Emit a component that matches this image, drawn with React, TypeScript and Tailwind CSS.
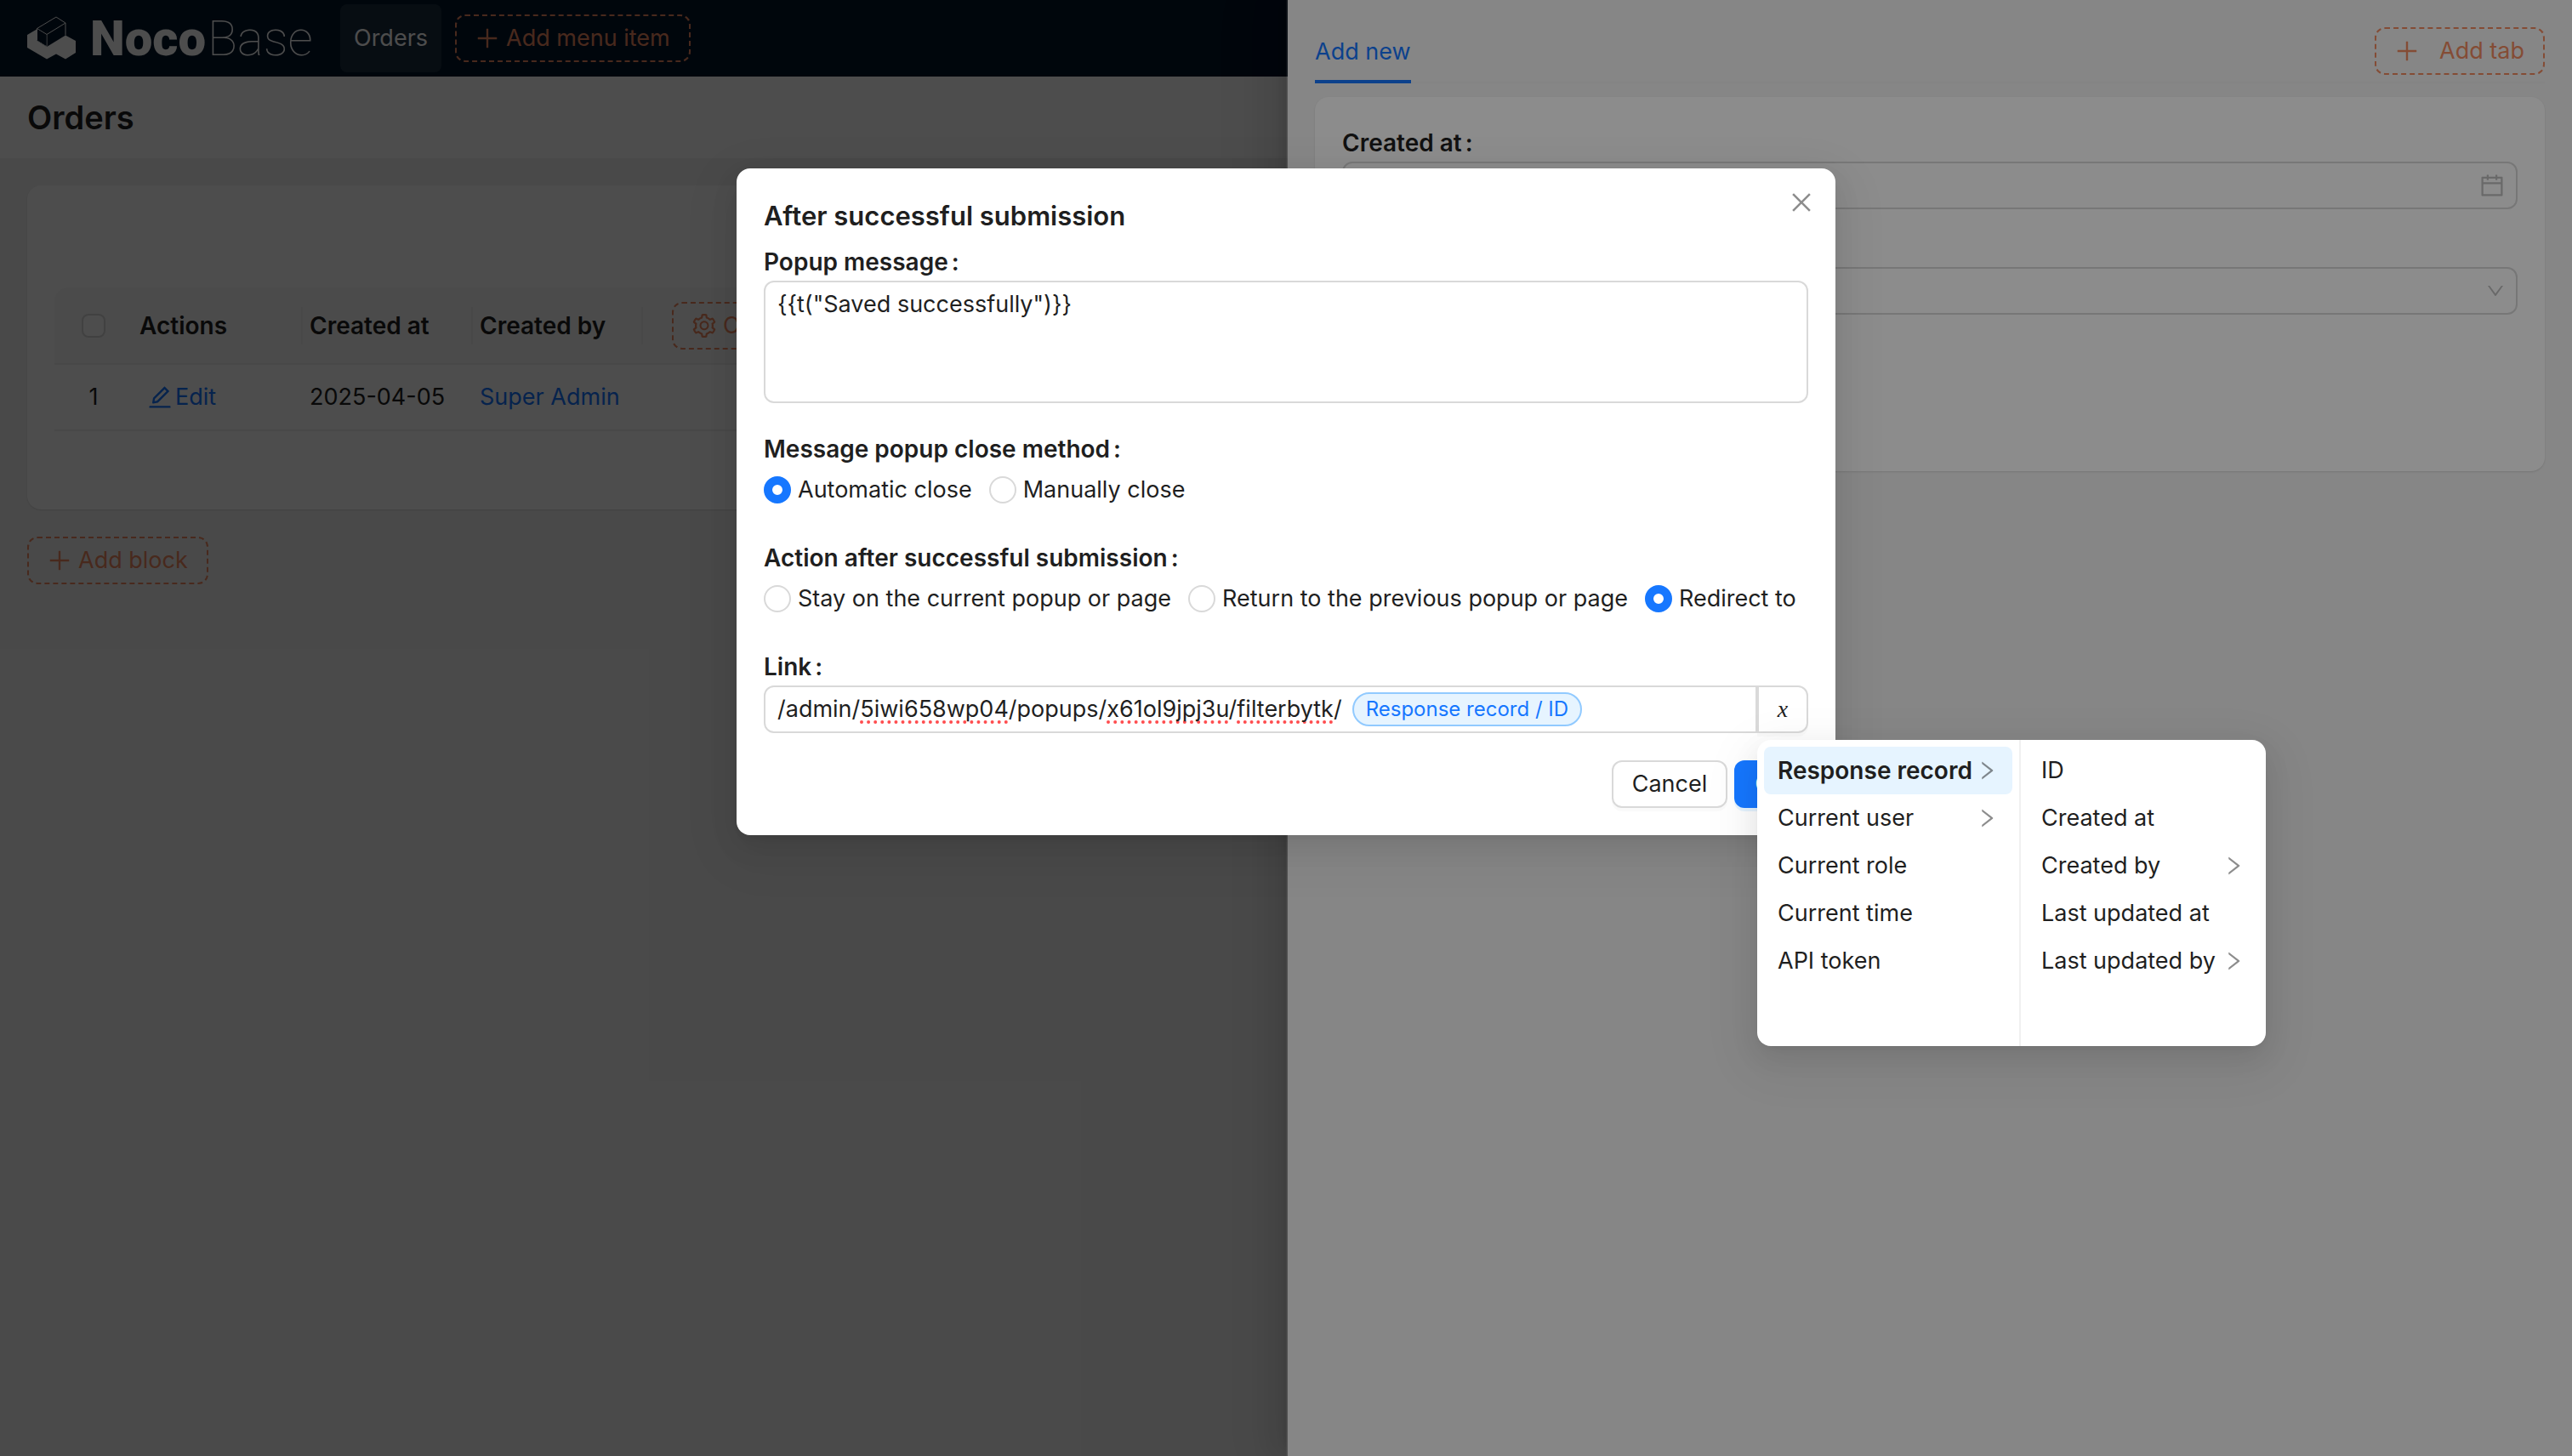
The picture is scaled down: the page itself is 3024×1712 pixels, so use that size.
import type { ReactNode } from "react";
import clsx from "clsx";
import {
  AiOutlineCalendar,
  AiOutlineClose,
  AiOutlineDown,
  AiOutlineEdit,
  AiOutlinePlus,
  AiOutlineRight,
  AiOutlineSetting,
} from "react-icons/ai";

type MenuOption = { label: string; children?: boolean; active?: boolean };

const VARIABLE_OPTIONS: MenuOption[] = [
  { label: "Response record", children: true, active: true },
  { label: "Current user", children: true },
  { label: "Current role" },
  { label: "Current time" },
  { label: "API token" },
];

const RECORD_FIELDS: MenuOption[] = [
  { label: "ID" },
  { label: "Created at" },
  { label: "Created by", children: true },
  { label: "Last updated at" },
  { label: "Last updated by", children: true },
];

function Logo() {
  return (
    <a href="#home" className="flex w-[368px] items-center gap-4 pl-8 text-white" aria-label="NocoBase">
      <svg viewBox="0 0 58 52" className="h-[52px] w-[58px] shrink-0" aria-hidden="true">
        <path
          d="M0 22L11 15.5V28.5L23 36L45 22.5L57 29V43L45 50.5L34 44.5L23 50.5L0 37Z"
          fill="currentColor"
        />
        <path
          d="M11.5 14.5L34 1L45 8V22.5M11.5 14.5V28.5L23 35.5V21.5M11.5 14.5L23 21.5L45 8"
          fill="none"
          stroke="currentColor"
          strokeWidth="1"
        />
        <path d="M12 15.5L22.5 22V35L12 28.5Z" fill="#001529" />
      </svg>
      <span className="flex gap-0.5 font-['Roboto',sans-serif] text-[58px] leading-none">
        <span className="font-black">Noco</span>
        <span className="font-thin">Base</span>
      </span>
    </a>
  );
}

/** Dashed orange button used by the page designer. */
function DesignerButton({ icon, wide, children }: { icon: ReactNode; wide?: boolean; children: ReactNode }) {
  return (
    <button
      type="button"
      className={clsx(
        "flex h-14 shrink-0 items-center whitespace-nowrap rounded-xl border-2 border-dashed border-[#f18b62] pl-5 pr-[22px] text-[#f18b62]",
        wide ? "gap-[22px]" : "gap-1.5"
      )}
    >
      {icon}
      {children}
    </button>
  );
}

function FieldLabel({ htmlFor, children }: { htmlFor: string; children: ReactNode }) {
  return (
    <label htmlFor={htmlFor} className="block text-[28px] font-semibold leading-[44px]">
      {children}
      <span className="ml-1">:</span>
    </label>
  );
}

function HeadCell({ children }: { children: ReactNode }) {
  return (
    <th scope="col" className="p-0 text-left text-[28px] font-semibold leading-[44px]">
      <div className="border-r-2 border-[#f0f0f0] pl-2">{children}</div>
    </th>
  );
}

function OrdersTable() {
  return (
    <table className="w-full table-fixed border-collapse">
      <colgroup>
        <col className="w-[92px]" />
        <col className="w-[200px]" />
        <col className="w-[200px]" />
        <col className="w-[200px]" />
        <col />
      </colgroup>
      <thead>
        <tr className="h-[90px] border-b-2 border-[#f0f0f0] bg-[#fafafa]">
          <th className="p-0">
            <input
              type="checkbox"
              aria-label="Select all"
              className="mx-auto block size-7 appearance-none rounded-lg border-2 border-[#d9d9d9] bg-white"
            />
          </th>
          <HeadCell>Actions</HeadCell>
          <HeadCell>Created at</HeadCell>
          <HeadCell>Created by</HeadCell>
          <th className="p-0 pl-[34px] text-left font-normal">
            <DesignerButton icon={<AiOutlineSetting className="size-8" />}>Configure columns</DesignerButton>
          </th>
        </tr>
      </thead>
      <tbody>
        <tr className="h-[78px] border-b-2 border-[#f0f0f0]">
          <td className="p-0 text-center">1</td>
          <td className="p-0 pl-4">
            <a href="#edit" className="flex items-center gap-0.5 text-[#1677ff]">
              <AiOutlineEdit className="size-8" />
              Edit
            </a>
          </td>
          <td className="whitespace-nowrap p-0 pl-2">2025-04-05</td>
          <td className="p-0 pl-2">
            <a href="#user" className="whitespace-nowrap text-[#1677ff]">
              Super Admin
            </a>
          </td>
          <td />
        </tr>
      </tbody>
    </table>
  );
}

function OrdersPage() {
  return (
    <div className="min-h-screen bg-[#f5f5f5]">
      <header className="flex h-[90px] items-center bg-[#001529] pr-8">
        <Logo />
        <nav className="ml-8 flex items-center gap-4">
          <a href="#orders" className="flex h-20 items-center rounded-lg bg-white/10 px-4 text-white">
            Orders
          </a>
          <DesignerButton icon={<AiOutlinePlus className="size-8" />}>Add menu item</DesignerButton>
        </nav>
      </header>
      <div className="flex h-24 items-center bg-white px-8">
        <h1 className="text-[38px] font-semibold leading-[56px]">Orders</h1>
      </div>
      <main className="flex flex-col items-start gap-8 p-8">
        <section className="w-full rounded-2xl bg-white px-8 pb-[92px] pt-[120px] shadow-sm">
          <div className="overflow-hidden rounded-t-2xl">
            <OrdersTable />
          </div>
        </section>
        <DesignerButton icon={<AiOutlinePlus className="size-8" />}>Add block</DesignerButton>
      </main>
    </div>
  );
}

function RecordDrawer() {
  return (
    <aside className="absolute inset-y-0 right-0 w-1/2 border-l-2 border-white/10 bg-[#f5f5f5] bg-clip-padding px-8 shadow-[-12px_0_32px_rgba(0,0,0,0.08),-6px_0_12px_-8px_rgba(0,0,0,0.12),-18px_0_56px_16px_rgba(0,0,0,0.05)]">
      <div className="flex items-start justify-between border-b-2 border-[#f0f0f0] pt-8" role="tablist">
        <button
          type="button"
          role="tab"
          aria-selected="true"
          className="-mb-0.5 h-[66px] border-b-4 border-[#1677ff] pb-1 text-[#1677ff]"
        >
          Add new
        </button>
        <DesignerButton wide icon={<AiOutlinePlus className="size-8" />}>
          Add tab
        </DesignerButton>
      </div>
      <form className="mt-4 flex flex-col gap-6 rounded-2xl bg-white px-8 pb-[184px] pt-8 shadow-sm">
        <div>
          <FieldLabel htmlFor="created-at">Created at</FieldLabel>
          <div className="flex h-14 items-center rounded-xl border-2 border-[#d9d9d9] px-3">
            <input id="created-at" type="text" className="min-w-0 flex-1 outline-none" />
            <AiOutlineCalendar className="size-8 text-black/25" />
          </div>
        </div>
        <div>
          <FieldLabel htmlFor="created-by">Created by</FieldLabel>
          <div className="flex h-14 items-center rounded-xl border-2 border-[#d9d9d9] px-3">
            <select id="created-by" className="h-full min-w-0 flex-1 appearance-none outline-none" />
            <AiOutlineDown className="size-6 text-black/25" />
          </div>
        </div>
      </form>
    </aside>
  );
}

function RadioOption({ name, label, checked }: { name: string; label: string; checked?: boolean }) {
  return (
    <label className="flex items-center gap-2 whitespace-nowrap">
      <input
        type="radio"
        name={name}
        defaultChecked={checked}
        className="size-8 shrink-0 appearance-none rounded-full border-2 border-[#d9d9d9] bg-white checked:border-[10px] checked:border-[#1677ff]"
      />
      {label}
    </label>
  );
}

function RadioField({ legend, children }: { legend: string; children: ReactNode }) {
  return (
    <fieldset className="mt-8">
      <legend className="text-[28px] font-semibold leading-[44px]">
        {legend}
        <span className="ml-1">:</span>
      </legend>
      <div className="flex h-[52px] items-center gap-5">{children}</div>
    </fieldset>
  );
}

function MenuColumn({ options }: { options: MenuOption[] }) {
  return (
    <ul role="menu" className="p-2">
      {options.map((option) => (
        <li key={option.label} role="none">
          <button
            type="button"
            role="menuitem"
            className={clsx(
              "flex h-14 w-full items-center justify-between whitespace-nowrap rounded-lg px-4",
              option.active && "bg-[#e6f4ff] text-[28px] font-semibold"
            )}
          >
            {option.label}
            {option.children && <AiOutlineRight className="size-7 text-black/45" />}
          </button>
        </li>
      ))}
    </ul>
  );
}

function VariableMenu() {
  return (
    <div className="absolute left-0 top-full z-10 mt-2 grid h-[360px] w-[598px] grid-cols-[310px_1fr] divide-x-2 divide-[#f0f0f0] rounded-2xl bg-white shadow-[0_12px_32px_rgba(0,0,0,0.08),0_6px_12px_-8px_rgba(0,0,0,0.12),0_18px_56px_16px_rgba(0,0,0,0.05)]">
      <MenuColumn options={VARIABLE_OPTIONS} />
      <MenuColumn options={RECORD_FIELDS} />
    </div>
  );
}

function Misspelled({ children }: { children: ReactNode }) {
  return (
    <span className="underline decoration-[#ff4d4f] decoration-dotted decoration-[4px] underline-offset-4 [text-decoration-skip-ink:none]">
      {children}
    </span>
  );
}

function LinkField() {
  return (
    <div className="mt-8">
      <div id="link-label" className="text-[28px] font-semibold leading-[44px]">
        Link<span className="ml-1">:</span>
      </div>
      <div className="flex">
        <div
          role="textbox"
          aria-labelledby="link-label"
          contentEditable
          suppressContentEditableWarning
          spellCheck={false}
          className="flex h-14 min-w-0 flex-1 items-center gap-3 whitespace-nowrap rounded-l-xl border-2 border-[#d9d9d9] px-3.5 outline-none"
        >
          <span>
            /admin/<Misspelled>5iwi658wp04</Misspelled>/popups/<Misspelled>x61ol9jpj3u</Misspelled>/
            <Misspelled>filterbytk</Misspelled>/
          </span>
          <span className="flex h-10 items-center rounded-full border-2 border-[#91caff] bg-[#e6f4ff] px-3.5 text-2xl text-[#1677ff]">
            Response record / ID
          </span>
        </div>
        <div className="relative">
          <button
            type="button"
            aria-label="Variables"
            className="h-14 w-[60px] rounded-r-xl border-2 border-[#d9d9d9] bg-white font-['Liberation_Serif',serif] text-[28px] italic shadow-[0_4px_0_rgba(0,0,0,0.02)]"
          >
            x
          </button>
          <VariableMenu />
        </div>
      </div>
    </div>
  );
}

function SubmissionDialog() {
  return (
    <div
      role="dialog"
      aria-labelledby="dialog-title"
      className="relative w-[1292px] rounded-2xl bg-white p-8 shadow-[0_12px_32px_rgba(0,0,0,0.08),0_6px_12px_-8px_rgba(0,0,0,0.12),0_18px_56px_16px_rgba(0,0,0,0.05)]"
    >
      <button type="button" aria-label="Close" className="absolute right-6 top-6 text-black/45">
        <AiOutlineClose className="size-8" />
      </button>
      <h2 id="dialog-title" className="mb-2 text-[31px] font-semibold leading-[48px]">
        After successful submission
      </h2>
      <FieldLabel htmlFor="popup-message">Popup message</FieldLabel>
      <textarea
        id="popup-message"
        defaultValue={'{{t("Saved successfully")}}'}
        spellCheck={false}
        className="block h-36 w-full resize-none rounded-xl border-2 border-[#d9d9d9] px-3.5 py-1 outline-none"
      />
      <RadioField legend="Message popup close method">
        <RadioOption name="close" label="Automatic close" checked />
        <RadioOption name="close" label="Manually close" />
      </RadioField>
      <RadioField legend="Action after successful submission">
        <RadioOption name="action" label="Stay on the current popup or page" />
        <RadioOption name="action" label="Return to the previous popup or page" />
        <RadioOption name="action" label="Redirect to" checked />
      </RadioField>
      <LinkField />
      <div className="mt-8 flex justify-end gap-2">
        <button
          type="button"
          className="h-14 rounded-xl border-2 border-[#d9d9d9] px-[22px] shadow-[0_4px_0_rgba(0,0,0,0.02)]"
        >
          Cancel
        </button>
        <button
          type="button"
          className="h-14 rounded-xl bg-[#1677ff] px-6 text-white shadow-[0_4px_0_rgba(5,145,255,0.1)]"
        >
          OK
        </button>
      </div>
    </div>
  );
}

export default function App() {
  return (
    <div className="relative min-h-screen overflow-hidden font-['Inter',sans-serif] text-[27px] leading-[44px] text-[#1f1f1f]">
      <OrdersPage />
      <div className="absolute inset-0 bg-black/45">
        <RecordDrawer />
      </div>
      <div className="absolute inset-0 flex items-start justify-center bg-black/45 pt-[198px]">
        <SubmissionDialog />
      </div>
    </div>
  );
}
